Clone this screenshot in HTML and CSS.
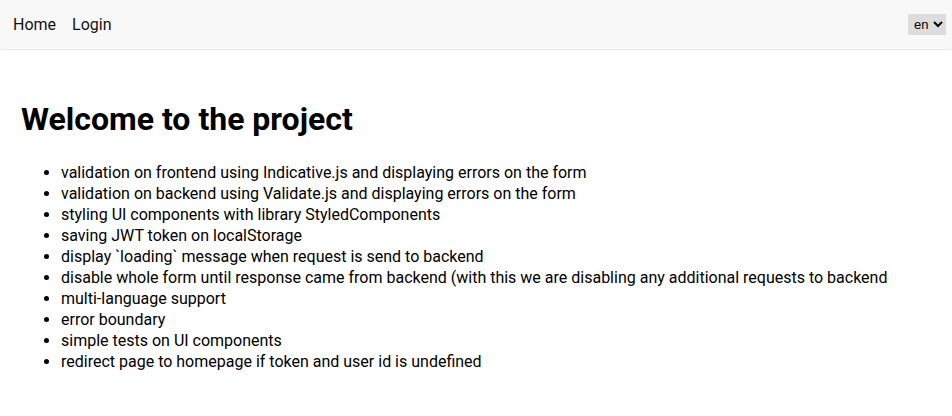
FILE: index.html
```html
<!DOCTYPE html>
<html lang="en">
<head>
<meta charset="utf-8">
<title>Project</title>
<link rel="stylesheet" href="styles.css">
</head>
<body>
<header class="topbar">
  <nav class="nav">
    <a class="nav-link" href="#">Home</a>
    <a class="nav-link" href="#">Login</a>
  </nav>
  <select class="lang">
    <option>en</option>
  </select>
</header>
<main class="content">
  <h1 class="title">Welcome to the project</h1>
  <ul class="features">
    <li>validation on frontend using Indicative.js and displaying errors on the form</li>
    <li>validation on backend using Validate.js and displaying errors on the form</li>
    <li>styling UI components with library StyledComponents</li>
    <li>saving JWT token on localStorage</li>
    <li>display `loading` message when request is send to backend</li>
    <li>disable whole form until response came from backend (with this we are disabling any additional requests to backend</li>
    <li>multi-language support</li>
    <li>error boundary</li>
    <li>simple tests on UI components</li>
    <li>redirect page to homepage if token and user id is undefined</li>
  </ul>
</main>
</body>
</html>
```
FILE: styles.css
```css
html, body {
  margin: 0;
  padding: 0;
  background: #fff;
  font-family: Roboto, "Liberation Sans", sans-serif;
  color: #000;
}
.topbar {
  height: 50px;
  box-sizing: border-box;
  background: #f8f8f8;
  border-bottom: 1px solid #ececec;
  box-shadow: 0 1px 2px rgba(0,0,0,0.04);
  display: flex;
  align-items: center;
  justify-content: space-between;
  padding: 0 6px 0 13px;
}
.nav {
  display: flex;
  gap: 16px;
}
.nav-link {
  color: #111;
  text-decoration: none;
  font-size: 16px;
}
.lang {
  font-family: "Liberation Sans", Arial, sans-serif;
  font-size: 13px;
  height: 21px;
  background: #ddd;
  border: none;
  color: #000;
  padding: 0 1px 0 2px;
}
.content {
  padding: 0 21px;
}
.title {
  font-size: 32px;
  font-weight: 700;
  margin: 50px 0 24px;
}
.features {
  margin: 0;
  padding-left: 40px;
  font-size: 16px;
  line-height: 21px;
}
```
